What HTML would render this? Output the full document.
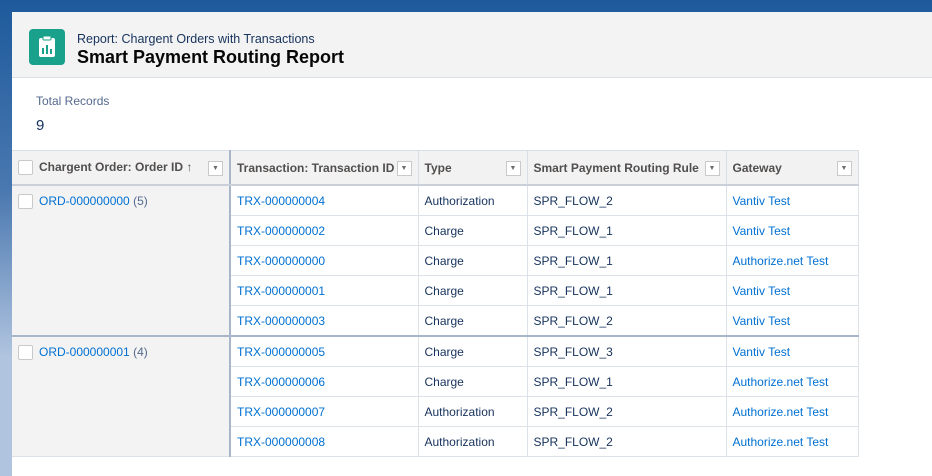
<!DOCTYPE html><html><head><style>
body{margin:0;width:932px;height:476px;overflow:hidden;font-family:"Liberation Sans",sans-serif;background:linear-gradient(180deg,#1d5a9c 0%,#4a78b0 40%,#b0c4df 75%,#b0c4df 100%);position:relative}
.card{position:absolute;left:12px;top:12px;width:920px;height:464px;background:#fff}
.hdr{height:65px;background:#f3f3f3;border-bottom:1px solid #d8dde6;position:relative}
.ic{position:absolute;left:17px;top:17px;width:36px;height:36px;background:#1aa18b;border-radius:4px}
.t1{position:absolute;left:65px;top:20px;font-size:12.5px;color:#16325c}
.t2{position:absolute;left:65px;top:35px;font-size:18px;font-weight:bold;color:#080707}
.tr{position:absolute;left:24px;top:82px;font-size:12px;color:#54698d}
.tn{position:absolute;left:24px;top:105px;font-size:15px;color:#16325c}
table{position:absolute;left:0;top:138px;border-collapse:collapse;font-size:12px;width:846px;table-layout:fixed}
th{height:33px;background:#f3f2f2;color:#514f4d;text-align:left;font-weight:bold;padding:0 6px;border-top:1px solid #d8dde6;border-bottom:2px solid #c9d0da;border-right:1px solid #d8dde6;position:relative;white-space:nowrap}
td{height:29px;padding:0 6px;border-bottom:1px solid #dde1e8;border-right:1px solid #dde1e8;color:#16325c;white-space:nowrap}
td.g{background:#f3f3f3;vertical-align:top;padding-top:8px;border-right:2px solid #a9b6c8;border-bottom:2px solid #a9b6c8}
a{color:#0070d2;text-decoration:none}
.cb{display:inline-block;width:13px;height:13px;border:1px solid #c9c9c9;background:#fff;border-radius:2px;vertical-align:middle;margin-right:6px}
.dd{position:absolute;right:6px;top:10px;width:13px;height:13px;border:1px solid #c9c9c9;background:#fff;font-size:7px;color:#706e6b;text-align:center;line-height:13px}
.bb td.x{border-bottom:2px solid #a9b6c8}
</style></head><body>
<div class="card">
<div class="hdr"><div class="ic"><svg width="36" height="36"><rect x="10" y="9" width="16" height="19" rx="2" fill="#fff"/><rect x="14" y="7" width="8" height="4" rx="1" fill="#fff" stroke="#1aa18b"/><rect x="13" y="19" width="2" height="6" fill="#1aa18b"/><rect x="17" y="16" width="2" height="9" fill="#1aa18b"/><rect x="21" y="20" width="2" height="5" fill="#1aa18b"/></svg></div>
<div class="t1">Report: Chargent Orders with Transactions</div><div class="t2">Smart Payment Routing Report</div></div>
<div class="tr">Total Records</div><div class="tn">9</div>
<table>
<colgroup><col style="width:218px"><col style="width:188px"><col style="width:109px"><col style="width:199px"><col style="width:132px"></colgroup>
<tr><th style="border-right:2px solid #a9b6c8"><span class="cb"></span>Chargent Order: Order ID <span style="font-weight:normal">↑</span><span class="dd">▼</span></th><th>Transaction: Transaction ID<span class="dd">▼</span></th><th>Type<span class="dd">▼</span></th><th>Smart Payment Routing Rule<span class="dd">▼</span></th><th>Gateway<span class="dd">▼</span></th></tr>
<tr><td class="g" rowspan="5"><span class="cb"></span><a>ORD-000000000</a> <span style="color:#54698d">(5)</span></td><td><a>TRX-000000004</a></td><td>Authorization</td><td>SPR_FLOW_2</td><td><a>Vantiv Test</a></td></tr>
<tr><td><a>TRX-000000002</a></td><td>Charge</td><td>SPR_FLOW_1</td><td><a>Vantiv Test</a></td></tr>
<tr><td><a>TRX-000000000</a></td><td>Charge</td><td>SPR_FLOW_1</td><td><a>Authorize.net Test</a></td></tr>
<tr><td><a>TRX-000000001</a></td><td>Charge</td><td>SPR_FLOW_1</td><td><a>Vantiv Test</a></td></tr>
<tr class="bb"><td class="x"><a>TRX-000000003</a></td><td class="x">Charge</td><td class="x">SPR_FLOW_2</td><td class="x"><a>Vantiv Test</a></td></tr>
<tr><td class="g" rowspan="4" style="border-bottom:1px solid #dde1e8"><span class="cb"></span><a>ORD-000000001</a> <span style="color:#54698d">(4)</span></td><td><a>TRX-000000005</a></td><td>Charge</td><td>SPR_FLOW_3</td><td><a>Vantiv Test</a></td></tr>
<tr><td><a>TRX-000000006</a></td><td>Charge</td><td>SPR_FLOW_1</td><td><a>Authorize.net Test</a></td></tr>
<tr><td><a>TRX-000000007</a></td><td>Authorization</td><td>SPR_FLOW_2</td><td><a>Authorize.net Test</a></td></tr>
<tr><td><a>TRX-000000008</a></td><td>Authorization</td><td>SPR_FLOW_2</td><td><a>Authorize.net Test</a></td></tr>
</table>
</div>
</body></html>
